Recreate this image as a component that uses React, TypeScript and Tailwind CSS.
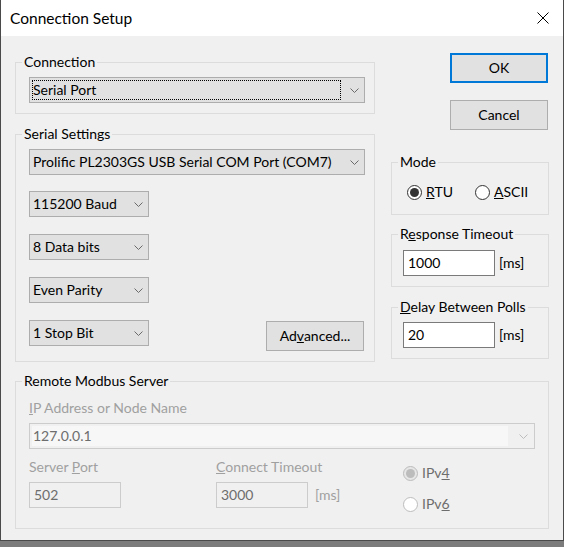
import React from "react";

const font = "font-['Lato','Noto_Sans',sans-serif]";

const Chevron: React.FC<{ color?: string }> = ({ color = "#6a6a6a" }) => (
  <svg width="9" height="5" viewBox="0 0 9 5" className="block">
    <path d="M0.5 0.5 L4.5 4.5 L8.5 0.5" fill="none" stroke={color} strokeWidth="1" />
  </svg>
);

const Combo: React.FC<{ value: string; width: string; focus?: boolean }> = ({ value, width, focus }) => (
  <div className={`${width} h-[26px] border border-[#adadad] bg-[#e1e1e1] flex p-[2px]`}>
    <div
      className={`flex-1 flex items-center border border-dotted ${
        focus ? "border-black" : "border-transparent"
      } whitespace-nowrap overflow-hidden`}
    >
      {value}
    </div>
    <div className="w-[21px] flex items-center justify-end pr-[3px]">
      <Chevron />
    </div>
  </div>
);

const Group: React.FC<{
  label: React.ReactNode;
  className?: string;
  inner?: string;
  children: React.ReactNode;
}> = ({ label, className = "", inner = "", children }) => (
  <fieldset className={`border border-[#dcdcdc] p-0 m-0 min-w-0 ${className}`}>
    <legend className="ml-[6px] px-[2px] leading-[20px] text-black">{label}</legend>
    <div className={inner}>{children}</div>
  </fieldset>
);

const Radio: React.FC<{ checked?: boolean; disabled?: boolean }> = ({ checked, disabled }) => (
  <div
    className={`w-[15px] h-[15px] rounded-full border flex items-center justify-center ${
      disabled ? "border-[#bcbcbc] " + (checked ? "bg-[#e6e6e6]" : "bg-white") : "border-[#333333] bg-white"
    }`}
  >
    {checked && (
      <div className={`w-[9px] h-[9px] rounded-full ${disabled ? "bg-[#bcbcbc]" : "bg-[#333333]"}`} />
    )}
  </div>
);

const TextBox: React.FC<{ value: string; disabled?: boolean }> = ({ value, disabled }) => (
  <div
    className={`w-[92px] h-[26px] border flex items-center pl-[4px] ${
      disabled ? "border-[#cccccc] bg-[#f0f0f0] text-[#6d6d6d]" : "border-[#7a7a7a] bg-white text-black"
    }`}
  >
    {value}
  </div>
);

const Button: React.FC<{ children: React.ReactNode; primary?: boolean; className?: string }> = ({
  children,
  primary,
  className = "",
}) => (
  <div
    className={`w-[98px] h-[30px] bg-[#e1e1e1] flex items-center justify-center ${
      primary ? "border-2 border-[#0078d7]" : "border border-[#adadad]"
    } ${className}`}
  >
    {children}
  </div>
);

export default function App() {
  return (
    <div className={`w-[564px] h-[547px] bg-[#7c7c7c] ${font} text-[14px] leading-[20px] text-black`}>
      <div className="w-[564px] h-[541px] border-l border-r border-b border-[#4a4a4a] bg-[#f0f0f0] flex flex-col">
        {/* title bar */}
        <div className="h-[36px] bg-white flex items-center justify-between pl-[9px] pr-[14px]">
          <span className="text-[15.5px]">Connection Setup</span>
          <svg width="12" height="12" viewBox="0 0 12 12">
            <path d="M0.5 0.5 L11.5 11.5 M11.5 0.5 L0.5 11.5" stroke="#000" strokeWidth="1" />
          </svg>
        </div>

        {/* body */}
        <div className="flex-1 pl-[14px] pt-[16px]">
          <div className="flex gap-[16px]">
            {/* left column */}
            <div className="w-[360px] flex flex-col">
              <Group label="Connection" inner="pl-[13px] pr-[9px] pt-[5px] pb-[10px]">
                <Combo value="Serial Port" width="w-full" focus />
              </Group>

              <Group label="Serial Settings" className="mt-[10px]" inner="pl-[13px] pr-[9px] pt-[5px] pb-[10px]">
                <Combo value="Prolific PL2303GS USB Serial COM Port (COM7)" width="w-full" />
                <div className="mt-[16px]">
                  <Combo value="115200 Baud" width="w-[120px]" />
                </div>
                <div className="mt-[17px]">
                  <Combo value="8 Data bits" width="w-[120px]" />
                </div>
                <div className="mt-[17px]">
                  <Combo value="Even Parity" width="w-[120px]" />
                </div>
                <div className="mt-[17px] flex justify-between items-start">
                  <Combo value="1 Stop Bit" width="w-[120px]" />
                  <Button className="mt-[1px] mr-[1px]">
                    <span>
                      Ad<u>v</u>anced...
                    </span>
                  </Button>
                </div>
              </Group>
            </div>

            {/* right column */}
            <div className="w-[158px] flex flex-col">
              <Button primary className="ml-[59px] mt-[1px]">
                OK
              </Button>
              <Button className="ml-[59px] mt-[17px]">Cancel</Button>

              <Group label="Mode" className="mt-[22px]" inner="pl-[15px] pt-[10px] pb-[12px]">
                <div className="flex items-center h-[20px]">
                  <div className="w-[68px] flex items-center gap-[4px]">
                    <Radio checked />
                    <span>
                      <u>R</u>TU
                    </span>
                  </div>
                  <div className="flex items-center gap-[4px]">
                    <Radio />
                    <span>
                      <u>A</u>SCII
                    </span>
                  </div>
                </div>
              </Group>

              <Group
                label={
                  <span>
                    R<u>e</u>sponse Timeout
                  </span>
                }
                className="mt-[9px]"
                inner="pl-[11px] pt-[6px] pb-[10px] flex items-center gap-[4px]"
              >
                <TextBox value="1000" />
                <span>[ms]</span>
              </Group>

              <Group
                label={
                  <span>
                    <u>D</u>elay Between Polls
                  </span>
                }
                className="mt-[10px]"
                inner="pl-[11px] pt-[5px] pb-[10px] flex items-center gap-[4px]"
              >
                <TextBox value="20" />
                <span>[ms]</span>
              </Group>
            </div>
          </div>

          {/* remote server */}
          <Group
            label="Remote Modbus Server"
            className="mt-[9px] w-[534px]"
            inner="pl-[13px] pr-[13px] pt-[7px] pb-[14px]"
          >
            <div className="text-[#a0a0a0] h-[20px]">
              <u>I</u>P Address or Node Name
            </div>
            <div className="mt-[5px] h-[26px] border border-[#cccccc] bg-[#f0f0f0] flex p-[2px]">
              <div className="flex-1 bg-[#f7f7f7] flex items-center pl-[1px] text-[#6d6d6d]">127.0.0.1</div>
              <div className="w-[24px] flex items-center justify-end pr-[4px]">
                <Chevron color="#bcbcbc" />
              </div>
            </div>
            <div className="mt-[8px] flex">
              <div className="w-[187px]">
                <div className="text-[#a0a0a0] h-[20px]">
                  Server <u>P</u>ort
                </div>
                <div className="mt-[5px]">
                  <TextBox value="502" disabled />
                </div>
              </div>
              <div className="w-[187px]">
                <div className="text-[#a0a0a0] h-[20px]">
                  <u>C</u>onnect Timeout
                </div>
                <div className="mt-[5px] flex items-center gap-[7px]">
                  <TextBox value="3000" disabled />
                  <span className="text-[#a0a0a0]">[ms]</span>
                </div>
              </div>
              <div className="pt-[6px] flex flex-col gap-[11px]">
                <div className="h-[20px] flex items-center gap-[4px] text-[#6d6d6d]">
                  <Radio checked disabled />
                  <span>
                    IPv<u>4</u>
                  </span>
                </div>
                <div className="h-[20px] flex items-center gap-[4px] text-[#6d6d6d]">
                  <Radio disabled />
                  <span>
                    IPv<u>6</u>
                  </span>
                </div>
              </div>
            </div>
          </Group>
        </div>
      </div>
    </div>
  );
}
